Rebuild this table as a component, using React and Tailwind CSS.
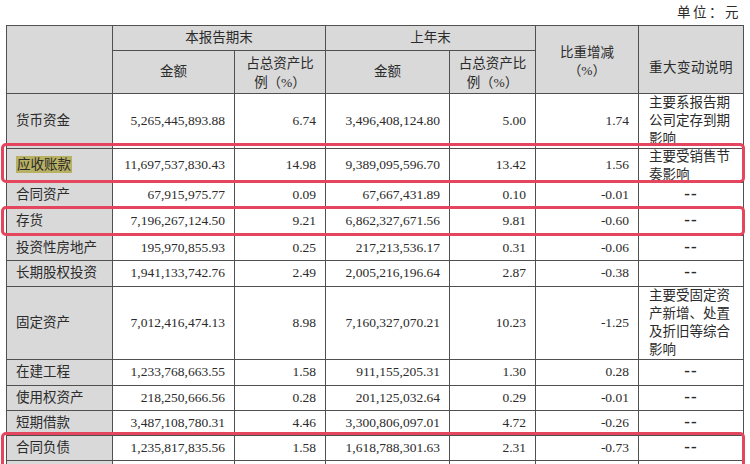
const rows = [
  { name: '货币资金', a: '5,265,445,893.88', ap: '6.74', b: '3,496,408,124.80', bp: '5.00', d: '1.74', note: ['主要系报告期', '公司定存到期', '影响'], h: 'h-[55px]' },
  { name: '应收账款', a: '11,697,537,830.43', ap: '14.98', b: '9,389,095,596.70', bp: '13.42', d: '1.56', note: ['主要受销售节', '奏影响'], h: 'h-[34px]', mark: true },
  { name: '合同资产', a: '67,915,975.77', ap: '0.09', b: '67,667,431.89', bp: '0.10', d: '-0.01', h: 'h-[25px]' },
  { name: '存货', a: '7,196,267,124.50', ap: '9.21', b: '6,862,327,671.56', bp: '9.81', d: '-0.60', h: 'h-[28px]' },
  { name: '投资性房地产', a: '195,970,855.93', ap: '0.25', b: '217,213,536.17', bp: '0.31', d: '-0.06', h: 'h-[25px]' },
  { name: '长期股权投资', a: '1,941,133,742.76', ap: '2.49', b: '2,005,216,196.64', bp: '2.87', d: '-0.38', h: 'h-[26px]' },
  { name: '固定资产', a: '7,012,416,474.13', ap: '8.98', b: '7,160,327,070.21', bp: '10.23', d: '-1.25', note: ['主要受固定资', '产新增、处置', '及折旧等综合', '影响'], h: 'h-[73px]' },
  { name: '在建工程', a: '1,233,768,663.55', ap: '1.58', b: '911,155,205.31', bp: '1.30', d: '0.28', h: 'h-[26px]' },
  { name: '使用权资产', a: '218,250,666.56', ap: '0.28', b: '201,125,032.64', bp: '0.29', d: '-0.01', h: 'h-[25px]' },
  { name: '短期借款', a: '3,487,108,780.31', ap: '4.46', b: '3,300,806,097.01', bp: '4.72', d: '-0.26', h: 'h-[25px]' },
  { name: '合同负债', a: '1,235,817,835.56', ap: '1.58', b: '1,618,788,301.63', bp: '2.31', d: '-0.73', h: 'h-[25px]' },
  { name: '', a: '', ap: '', b: '', bp: '', d: '', h: 'h-[25px]', blank: true },
];

const cell = 'border border-[#505050] p-0';
const num = `${cell} text-right pr-[9px]`;

function Note({ lines }) {
  if (!lines) return <span className="font-bold text-[17px] tracking-[1px] leading-none">--</span>;
  return (
    <div className="h-0 flex flex-col justify-center leading-[18px] text-left pl-[10px]">
      {lines.map((l, i) => (
        <div key={i} className="whitespace-nowrap">{l}</div>
      ))}
    </div>
  );
}

export default function App() {
  return (
    <div
      className="relative w-[750px] h-[464px] overflow-hidden bg-white text-[#2b2b2b] text-[13.5px]"
      style={{ fontFamily: '"Liberation Serif", "Noto Sans CJK SC", serif' }}
    >
      <div className="h-[25px] flex items-center justify-end pr-[9px] pt-[2px] tracking-[2.5px]">单位：元</div>
      <table className="ml-[6px] table-fixed border-collapse w-[737px]">
        <colgroup>
          <col className="w-[106px]" />
          <col className="w-[122px]" />
          <col className="w-[91px]" />
          <col className="w-[124px]" />
          <col className="w-[86px]" />
          <col className="w-[103px]" />
          <col className="w-[105px]" />
        </colgroup>
        <thead className="bg-[#d9d9d9] text-center">
          <tr className="h-[25px]">
            <th rowSpan={2} className={`${cell} font-normal`}></th>
            <th colSpan={2} className={`${cell} font-normal`}>本报告期末</th>
            <th colSpan={2} className={`${cell} font-normal`}>上年末</th>
            <th rowSpan={2} className={`${cell} font-normal leading-[18px] pt-[4px]`}>
              比重增减<br />（%）
            </th>
            <th rowSpan={2} className={`${cell} font-normal tracking-[0.5px] pt-[18px]`}>重大变动说明</th>
          </tr>
          <tr className="h-[43px]">
            <th className={`${cell} font-normal`}>金额</th>
            <th className={`${cell} font-normal leading-[19px] pt-[2px]`}>占总资产比<br />例（%）</th>
            <th className={`${cell} font-normal`}>金额</th>
            <th className={`${cell} font-normal leading-[19px] pt-[2px]`}>占总资产比<br />例（%）</th>
          </tr>
        </thead>
        <tbody>
          {rows.map((r, i) => (
            <tr key={i} className={r.h}>
              <td className={`${cell} bg-[#d9d9d9] pl-[9px] whitespace-nowrap`}>
                {r.mark ? <span className="bg-[#b8b062] px-[1px] py-[1px]">{r.name}</span> : r.name}
              </td>
              <td className={num}>{r.a}</td>
              <td className={num}>{r.ap}</td>
              <td className={num}>{r.b}</td>
              <td className={num}>{r.bp}</td>
              <td className={num}>{r.d}</td>
              <td className={`${cell} text-center`}>{r.blank ? null : <Note lines={r.note} />}</td>
            </tr>
          ))}
        </tbody>
      </table>

      <div className="absolute left-[1px] top-[143px] w-[744px] h-[40px] border-[3px] border-[#e4465e] rounded-[5px]" />
      <div className="absolute left-[1px] top-[206px] w-[744px] h-[30px] border-[3px] border-[#e4465e] rounded-[5px]" />
      <div className="absolute left-[1px] top-[432px] w-[744px] h-[40px] border-[3px] border-[#e4465e] rounded-[5px]" />
    </div>
  );
}
